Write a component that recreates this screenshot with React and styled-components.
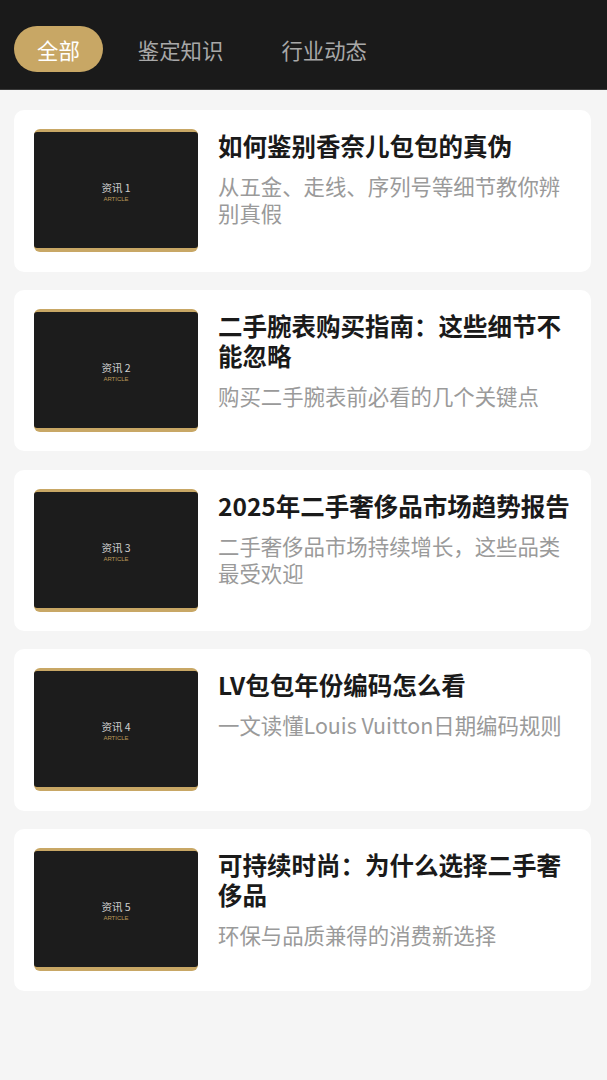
import React from "react"
import styled, { createGlobalStyle } from "styled-components"

const GlobalStyle = createGlobalStyle`
  html, body {
    margin: 0;
    padding: 0;
    background: #f5f5f5;
    font-family: "Noto Sans CJK SC", "Noto Sans", sans-serif;
  }
`

const articles = [
  { title: "如何鉴别香奈儿包包的真伪", desc: "从五金、走线、序列号等细节教你辨别真假" },
  { title: "二手腕表购买指南：这些细节不能忽略", desc: "购买二手腕表前必看的几个关键点" },
  { title: "2025年二手奢侈品市场趋势报告", desc: "二手奢侈品市场持续增长，这些品类最受欢迎" },
  { title: "LV包包年份编码怎么看", desc: "一文读懂Louis Vuitton日期编码规则" },
  { title: "可持续时尚：为什么选择二手奢侈品", desc: "环保与品质兼得的消费新选择" },
]

const tabs = ["全部", "鉴定知识", "行业动态"]

const Page = styled.div`
  min-height: 1080px;
  background: #f5f5f5;
`

const Header = styled.div`
  display: flex;
  gap: 12px;
  padding: 26px 14px 17px;
  background: #1a1a1a;
  border-bottom: 1px solid #3a3a3a;
`

const Tab = styled.div`
  height: 46px;
  padding: 0 23px;
  display: flex;
  align-items: center;
  border-radius: 23px;
  font-size: 21.4px;
  color: ${(p) => (p.$active ? "#ffffff" : "#a8a8a8")};
  background: ${(p) => (p.$active ? "#c8a765" : "transparent")};
`

const List = styled.div`
  display: flex;
  flex-direction: column;
  gap: 18.25px;
  padding: 20px 16px 20px 14px;
`

const Card = styled.div`
  display: flex;
  gap: 20px;
  padding: 19px 20px;
  background: #ffffff;
  border-radius: 10px;
  height: 123.5px;
`

const Thumb = styled.div`
  flex: 0 0 164px;
  height: 123px;
  border-radius: 6px;
  background: #c8a765;
  padding: 3px 0 4px;
  box-sizing: border-box;
  display: flex;
`

const ThumbInner = styled.div`
  flex: 1;
  background: #1c1c1c;
  border-radius: 3px;
  display: flex;
  flex-direction: column;
  align-items: center;
  justify-content: center;
  padding-top: 4px;
`

const ThumbLabel = styled.div`
  font-size: 10.5px;
  line-height: 13px;
  color: #d0d0d0;
`

const ThumbSub = styled.div`
  margin-top: 1px;
  font-family: "Liberation Sans", sans-serif;
  font-size: 6px;
  line-height: 8px;
  color: #b89858;
`

const Body = styled.div`
  flex: 1;
  min-width: 0;
  padding-top: 2px;
`

const Title = styled.div`
  font-size: 24.5px;
  line-height: 30px;
  font-weight: 700;
  color: #1a1a1a;
`

const Desc = styled.div`
  margin-top: 11px;
  font-size: 21.4px;
  line-height: 27px;
  color: #9a9a9a;
`

export default function App() {
  return (
    <Page>
      <GlobalStyle />
      <Header>
        {tabs.map((t, i) => (
          <Tab key={t} $active={i === 0}>{t}</Tab>
        ))}
      </Header>
      <List>
        {articles.map((a, i) => (
          <Card key={i}>
            <Thumb>
              <ThumbInner>
                <ThumbLabel>资讯 {i + 1}</ThumbLabel>
                <ThumbSub>ARTICLE</ThumbSub>
              </ThumbInner>
            </Thumb>
            <Body>
              <Title>{a.title}</Title>
              <Desc>{a.desc}</Desc>
            </Body>
          </Card>
        ))}
      </List>
    </Page>
  )
}
